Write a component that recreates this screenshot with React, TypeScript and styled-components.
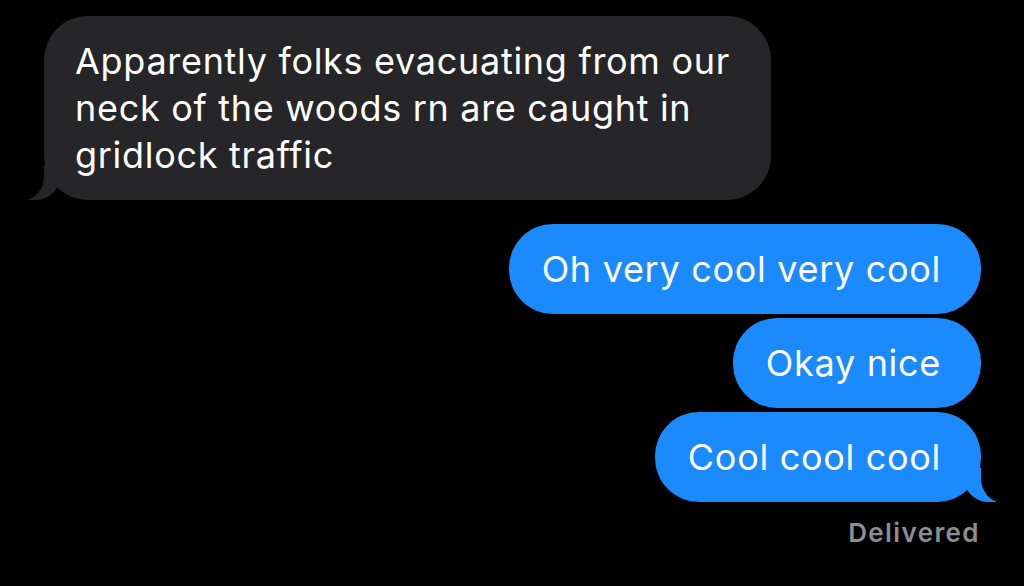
import React from 'react';
import styled, { createGlobalStyle } from 'styled-components';

const GlobalStyle = createGlobalStyle`
    html, body {
        margin: 0;
        padding: 0;
        background: #000;
    }
    body {
        font-family: Inter, "Liberation Sans", Arial, sans-serif;
        -webkit-font-smoothing: antialiased;
    }
`;

const Thread = styled.div`
    display: flex;
    flex-direction: column;
    width: 1024px;
    height: 586px;
    box-sizing: border-box;
    padding: 16px 43px 0 44px;
    background: #000;
    overflow: hidden;
`;

const Row = styled.div<{ $sent?: boolean; $gap?: number }>`
    display: flex;
    justify-content: ${(p) => (p.$sent ? 'flex-end' : 'flex-start')};
    margin-top: ${(p) => p.$gap ?? 0}px;
`;

const Bubble = styled.div<{ $sent?: boolean; $tail?: boolean }>`
    position: relative;
    max-width: 727px;
    box-sizing: border-box;
    padding: 22px ${(p) => (p.$sent ? '40px' : '36px')} 21px ${(p) => (p.$sent ? '33px' : '31px')};
    border-radius: 44px;
    background: ${(p) => (p.$sent ? '#1b8afd' : '#262628')};
    color: #fff;
    font-size: 36px;
    line-height: 47px;
    letter-spacing: 0.7px;

    ${(p) =>
        p.$tail &&
        (p.$sent
            ? `
        &::before {
            content: '';
            position: absolute;
            bottom: 0;
            right: -15px;
            width: 34px;
            height: 34px;
            background: #1b8afd;
            border-bottom-left-radius: 26px 30px;
        }
        &::after {
            content: '';
            position: absolute;
            bottom: 0;
            right: -36px;
            width: 36px;
            height: 40px;
            background: #000;
            border-bottom-left-radius: 20px 24px;
        }`
            : `
        &::before {
            content: '';
            position: absolute;
            bottom: 0;
            left: -16px;
            width: 34px;
            height: 34px;
            background: #262628;
            border-bottom-right-radius: 26px 30px;
        }
        &::after {
            content: '';
            position: absolute;
            bottom: 0;
            left: -36px;
            width: 36px;
            height: 40px;
            background: #000;
            border-bottom-right-radius: 20px 24px;
        }`)}
`;

const Status = styled.div`
    align-self: flex-end;
    margin-top: 16px;
    margin-right: 1px;
    color: #8d8d92;
    font-size: 26px;
    font-weight: 600;
    line-height: 30px;
    letter-spacing: 1.4px;
`;

export default function App() {
    return (
        <>
            <GlobalStyle />
            <Thread>
                <Row>
                    <Bubble $tail>
                        Apparently folks evacuating from our neck of the woods rn are caught in gridlock traffic
                    </Bubble>
                </Row>
                <Row $sent $gap={24}>
                    <Bubble $sent>Oh very cool very cool</Bubble>
                </Row>
                <Row $sent $gap={4}>
                    <Bubble $sent>Okay nice</Bubble>
                </Row>
                <Row $sent $gap={4}>
                    <Bubble $sent $tail>Cool cool cool</Bubble>
                </Row>
                <Status>Delivered</Status>
            </Thread>
        </>
    );
}
